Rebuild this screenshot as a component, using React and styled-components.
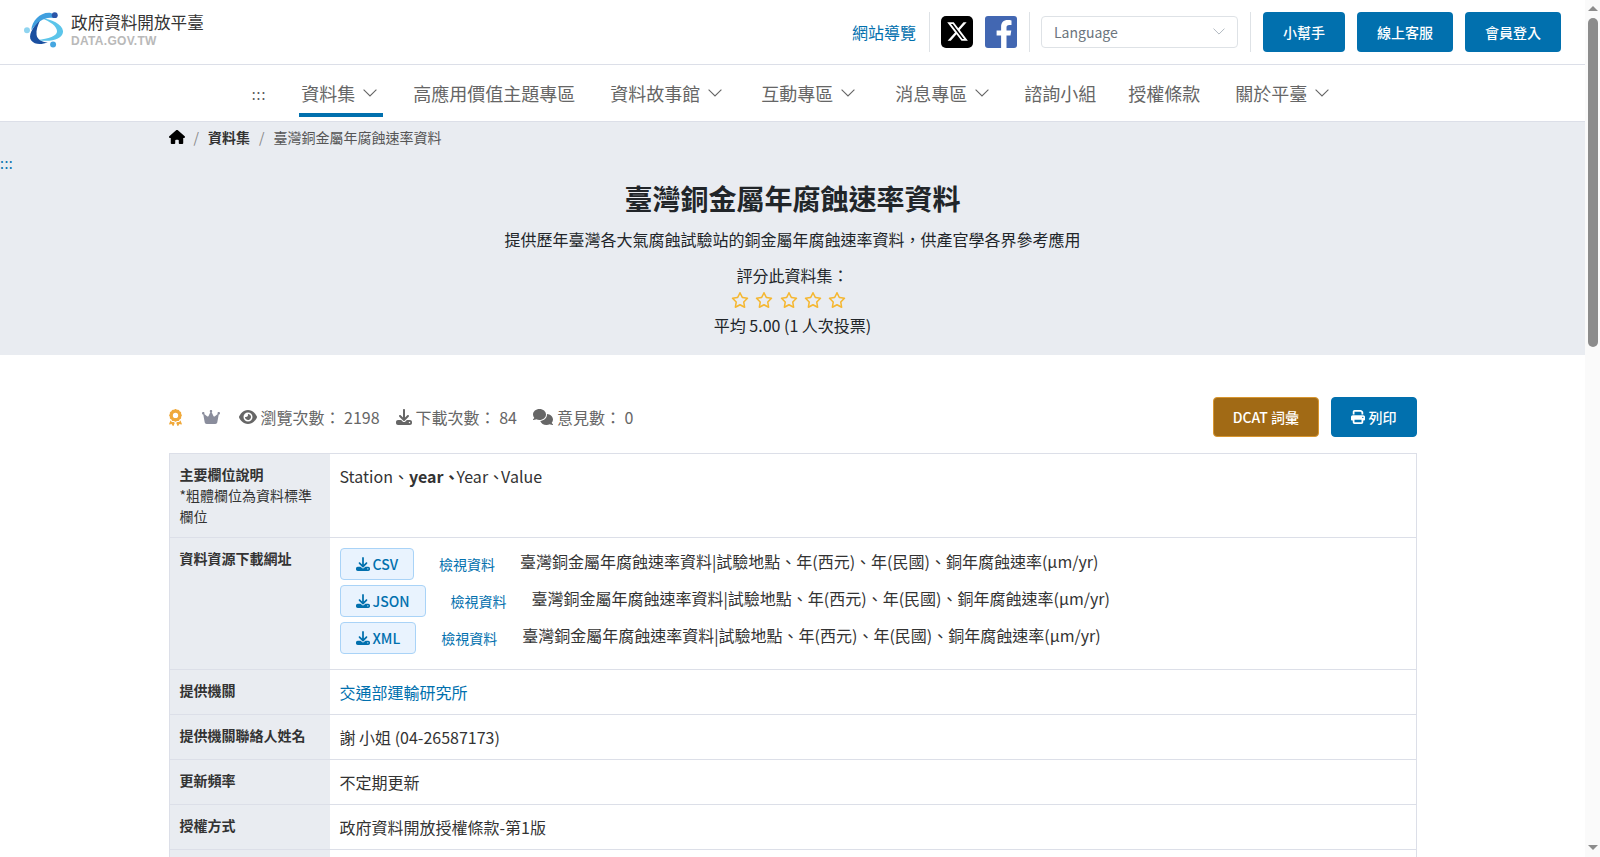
import React from "react";
import styled, { createGlobalStyle } from "styled-components";
import { FaHouse, FaEye, FaDownload, FaComments, FaPrint, FaCrown, FaAward, FaRegStar, FaXTwitter } from "react-icons/fa6";

const Global = createGlobalStyle`
  html, body { margin: 0; padding: 0; background: #fff; }
  body { font-family: "Noto Sans CJK TC", "Noto Sans", sans-serif; font-size: 16px; color: #212529; }
  * { box-sizing: border-box; }
  a { text-decoration: none; }
`;
const Page = styled.div`min-height: 2126px; padding-right: 15px;`;
const Scrollbar = styled.div`
  position: fixed; top: 0; right: 0; bottom: 0; width: 15px; background: #fafafa;
  display: flex; flex-direction: column; align-items: center;
`;
const ScrollArrow = styled.svg`width: 10px; height: 5px; margin: 6px 0 7px; flex: none; fill: #8c8c8c;`;
const ScrollThumb = styled.div`width: 10px; height: 329px; border-radius: 5px; background: #8c8c8c;`;
const ScrollSpacer = styled.div`flex: 1;`;
const TopBar = styled.header`
  height: 65px; display: flex; align-items: center; justify-content: space-between;
  padding: 0 24px 1px 24px; border-bottom: 1px solid #dcdfe8;
`;
const Brand = styled.a`display: flex; align-items: center; gap: 8px; margin-top: -3px;`;
const BrandText = styled.div`display: flex; flex-direction: column; gap: 2px;`;
const BrandName = styled.span`font-size: 16.6px; line-height: 21px; color: #333;`;
const BrandSub = styled.span`font-family: "Liberation Sans", sans-serif; font-weight: 700; font-size: 12px; line-height: 13px; color: #b9b9b9; letter-spacing: .3px;`;
const TopActions = styled.div`display: flex; align-items: center; height: 40px;`;
const SiteMap = styled.a`font-size: 16px; color: #0170ae; margin-right: 13px;`;
const Social = styled.div`display: flex; align-items: center; gap: 12px; height: 40px; padding: 0 12px 0 11px; border-left: 1px solid #dee2e6; border-right: 1px solid #dee2e6;`;
const SocialTile = styled.a`
  width: 32px; height: 32px; border-radius: ${p => p.$radius}px; background: ${p => p.$bg};
  display: flex; align-items: center; justify-content: center;
`;
const LangWrap = styled.div`padding: 0 12px 0 11px; height: 40px; display: flex; align-items: center; border-right: 1px solid #dee2e6;`;
const LangBox = styled.div`
  width: 197px; height: 32px; border: 1px solid #dee2e6; border-radius: 4px; padding: 0 12px;
  display: flex; align-items: center; justify-content: space-between; color: #6c757d; font-size: 14px;
`;
const TopButtons = styled.div`display: flex; gap: 12px; margin-left: 12px;`;
const TopButton = styled.a`
  height: 40px; padding: 0 20px; background: #0170ae; color: #fff; border-radius: 4px; font-size: 14px; font-weight: 500;
  display: flex; align-items: center;
`;
const Nav = styled.nav`
  height: 57px; display: flex; justify-content: center; align-items: flex-start; padding-left: 28px; border-bottom: 1px solid #dcdfe8; color: #666;
`;
const NavAnchor = styled.span`align-self: center; font-size: 14px; color: #555; margin: 2px 31px 0 0; letter-spacing: 1px;`;
const NavItem = styled.a`
  display: flex; align-items: center; gap: 8px; padding: 8px ${p => (p.$active ? 6 : 4)}px 0 ${p => (p.$active ? 2 : 4)}px;
  margin-left: ${p => (p.$active ? 2 : 0)}px; margin-right: ${p => p.$gap}px;
  font-size: 18px; color: #666; height: 52px;
  border-bottom: 4px solid ${p => (p.$active ? "#0170ae" : "transparent")};
`;
const Hero = styled.section`background: #e9ecf1; height: 233px; display: flex; flex-direction: column; align-items: center;`;
const Crumbs = styled.div`
  width: 1248px; height: 30px; display: flex; align-items: center; gap: 9px; font-size: 14px; color: #555;
`;
const CrumbStrong = styled.span`font-weight: 700; color: #333;`;
const CrumbSep = styled.span`color: #888;`;
const Anchor = styled.a`align-self: flex-start; color: #0170ae; font-size: 14px; line-height: 14px; margin-top: 4px; letter-spacing: .5px;`;
const HeroTitle = styled.h1`margin: 8px 0 0; font-size: 28px; line-height: 40px; font-weight: 700; color: #212529;`;
const HeroDesc = styled.p`margin: 9px 0 0; font-size: 16px; line-height: 24px;`;
const RateLabel = styled.div`margin-top: 12px; font-size: 16px; line-height: 24px;`;
const Stars = styled.div`display: flex; gap: 6.2px; color: #f5b731; font-size: 18px; height: 24px; align-items: center; margin: 1px 8px 1px 0;`;
const RateAvg = styled.div`font-size: 16px; line-height: 24px;`;
const Main = styled.main`width: 1248px; margin: 0 auto; padding-top: 42px;`;
const Meta = styled.div`display: flex; align-items: center; justify-content: space-between; height: 40px; margin-bottom: 16px;`;
const Stats = styled.div`display: flex; align-items: center; color: #666; font-size: 16px;`;
const Stat = styled.span`display: inline-flex; align-items: center; gap: 4px; margin-right: 16px;`;
const Badge = styled.span`display: inline-flex; margin: 0 ${p => p.$gap}px 0 ${p => p.$left || 0}px; color: ${p => p.$color}; font-size: ${p => p.$size}px;`;
const MetaButtons = styled.div`display: flex; gap: 12px;`;
const MetaButton = styled.a`
  height: 40px; padding: 0 ${p => p.$pad}px; border-radius: 4px; font-size: 14px; font-weight: 500; color: #fff;
  background: ${p => p.$bg}; border: 1px solid ${p => p.$border};
  display: flex; align-items: center; gap: 4px;
`;
const Table = styled.div`border: 1px solid #dcdfe8; border-bottom: 0;`;
const Row = styled.div`display: grid; grid-template-columns: 160px 1fr; border-bottom: 1px solid #dcdfe8; min-height: ${p => p.$h}px;`;
const Label = styled.div`background: #e9ecf1; padding: 10px; font-size: 14px; line-height: 21px; color: #333;`;
const LabelStrong = styled.strong`display: block; font-weight: 700;`;
const Value = styled.div`padding: 10px; font-size: 16px; line-height: 24px; color: #333;`;
const ValueLink = styled.a`color: #0170ae;`;
const Sep = styled.span`letter-spacing: -3px;`;
const ResourceList = styled.div`margin-top: -3px;`;
const ResourceRow = styled.div`display: flex; align-items: center; height: 37px;`;
const FileButton = styled.a`
  height: 32px; padding: 0 15px; display: inline-flex; align-items: center; gap: 3px; font-size: 14px; font-weight: 500; color: #0170ae;
  background: #e9f3fe; border: 1px solid #a9d3f7; border-radius: 4px;
`;
const ViewLink = styled.a`font-size: 14px; color: #0170ae; margin: 0 25px;`;
const ResourceName = styled.span`margin-top: -6px; font-size: 16px; color: #333;`;

const Chevron = ({ w = 14, h = 8, c = "#666" }) => (
  <svg width={w} height={h} viewBox="0 0 14 8"><path d="M.6.6 7 7 13.400.6" fill="none" stroke={c} strokeWidth="1.100"/></svg>
);
const FbMark = () => (
  <svg width="32" height="32" viewBox="0 0 32 32"><path fill="#fff" d="M21.500 32V19.500h4l.8-5h-4.800v-3c0-1.500.7-2.600 2.800-2.600h2.200V4.400c-.9-.2-2.400-.4-3.800-.4-4.200 0-6.600 2.500-6.600 6.900v3.600h-4.500v5h4.500V32z"/></svg>
);
const Logo = () => (
  <svg width="39" height="36" viewBox="0 0 118 108">
    <path d="M50 18C85 20 120 40 118 60 116 82 80 92 40 84 75 82 100 72 100 58 100 44 80 28 50 18z" fill="#5cc5ea"/>
    <path d="M22 55C24 25 50 0 78 2c8 1 12 8 12 16C65 12 40 28 22 55z" fill="#3f9fdf"/>
    <path d="M48 26C24 46 12 72 22 86c10 14 33 12 50 6-20-2-32-10-34-24-2-14 4-28 10-42z" fill="#1a4fa0"/>
    <circle cx="93" cy="9" r="9" fill="#2b55a8"/>
    <circle cx="9" cy="55" r="9" fill="#8fd4f0"/>
    <circle cx="88" cy="98" r="9" fill="#45a6e0"/>
  </svg>
);

const navs = [
  ["資料集", true, true, 26], ["高應用價值主題專區", false, false, 27], ["資料故事館", true, false, 31], ["互動專區", true, false, 32],
  ["消息專區", true, false, 27], ["諮詢小組", false, false, 24], ["授權條款", false, false, 27], ["關於平臺", true, false, 28],
];
const resources = ["CSV", "JSON", "XML"];
const resName = "臺灣銅金屬年腐蝕速率資料|試驗地點、年(西元)、年(民國)、銅年腐蝕速率(μm/yr)";

export default function App() {
  return (
    <Page>
      <Global />
      <Scrollbar>
        <ScrollArrow viewBox="0 0 10 5"><path d="M5 0l5 5H0z"/></ScrollArrow>
        <ScrollThumb />
        <ScrollSpacer />
        <ScrollArrow viewBox="0 0 10 5"><path d="M0 0h10L5 5z"/></ScrollArrow>
      </Scrollbar>
      <TopBar>
        <Brand>
          <Logo />
          <BrandText>
            <BrandName>政府資料開放平臺</BrandName>
            <BrandSub>DATA.GOV.TW</BrandSub>
          </BrandText>
        </Brand>
        <TopActions>
          <SiteMap>網站導覽</SiteMap>
          <Social>
            <SocialTile $bg="#000" $radius={5}><FaXTwitter size={23} color="#fff" /></SocialTile>
            <SocialTile $bg="#4267b2" $radius={3}><FbMark /></SocialTile>
          </Social>
          <LangWrap>
            <LangBox>Language<Chevron w={12} h={7} c="#adb5bd" /></LangBox>
          </LangWrap>
          <TopButtons>
            <TopButton>小幫手</TopButton>
            <TopButton>線上客服</TopButton>
            <TopButton>會員登入</TopButton>
          </TopButtons>
        </TopActions>
      </TopBar>
      <Nav>
        <NavAnchor>:::</NavAnchor>
        {navs.map(([t, c, a, g]) => (
          <NavItem key={t} $active={a} $gap={g}>{t}{c && <Chevron />}</NavItem>
        ))}
      </Nav>
      <Hero>
        <Crumbs>
          <FaHouse size={16} color="#000" />
          <CrumbSep>/</CrumbSep>
          <CrumbStrong>資料集</CrumbStrong>
          <CrumbSep>/</CrumbSep>
          <span>臺灣銅金屬年腐蝕速率資料</span>
        </Crumbs>
        <Anchor>:::</Anchor>
        <HeroTitle>臺灣銅金屬年腐蝕速率資料</HeroTitle>
        <HeroDesc>提供歷年臺灣各大氣腐蝕試驗站的銅金屬年腐蝕速率資料，供產官學各界參考應用</HeroDesc>
        <RateLabel>評分此資料集：</RateLabel>
        <Stars>{[0,1,2,3,4].map(i => <FaRegStar key={i} />)}</Stars>
        <RateAvg>平均 5.00 (1 人次投票)</RateAvg>
      </Hero>
      <Main>
        <Meta>
          <Stats>
            <Badge $color="#f0a93b" $gap={18} $left={-2} $size={17}><FaAward /></Badge>
            <Badge $color="#8a8d9c" $gap={19} $size={18}><FaCrown /></Badge>
            <Stat><FaEye size={18} />瀏覽次數： 2198</Stat>
            <Stat><FaDownload size={16} />下載次數： 84</Stat>
            <Stat><FaComments size={20} />意見數： 0</Stat>
          </Stats>
          <MetaButtons>
            <MetaButton $pad={18.5} $bg="#a16a15" $border="#d8962f">DCAT 詞彙</MetaButton>
            <MetaButton $pad={19} $bg="#0170ae" $border="#0170ae"><FaPrint size={14} />列印</MetaButton>
          </MetaButtons>
        </Meta>
        <Table>
          <Row $h={84}>
            <Label><LabelStrong>主要欄位說明</LabelStrong>*粗體欄位為資料標準欄位</Label>
            <Value>Station、<b>year<Sep>、</Sep></b>Year<Sep>、</Sep>Value</Value>
          </Row>
          <Row $h={132}>
            <Label><LabelStrong>資料資源下載網址</LabelStrong></Label>
            <Value>
              <ResourceList>
                {resources.map(f => (
                  <ResourceRow key={f}>
                    <FileButton><FaDownload size={14} />{f}</FileButton>
                    <ViewLink>檢視資料</ViewLink>
                    <ResourceName>{resName}</ResourceName>
                  </ResourceRow>
                ))}
              </ResourceList>
            </Value>
          </Row>
          <Row $h={45}><Label><LabelStrong>提供機關</LabelStrong></Label><Value><ValueLink>交通部運輸研究所</ValueLink></Value></Row>
          <Row $h={45}><Label><LabelStrong>提供機關聯絡人姓名</LabelStrong></Label><Value>謝 小姐 (04-26587173)</Value></Row>
          <Row $h={45}><Label><LabelStrong>更新頻率</LabelStrong></Label><Value>不定期更新</Value></Row>
          <Row $h={45}><Label><LabelStrong>授權方式</LabelStrong></Label><Value>政府資料開放授權條款-第1版</Value></Row>
          <Row $h={45}><Label><LabelStrong>計費方式</LabelStrong></Label><Value>免費</Value></Row>
        </Table>
      </Main>
    </Page>
  );
}
